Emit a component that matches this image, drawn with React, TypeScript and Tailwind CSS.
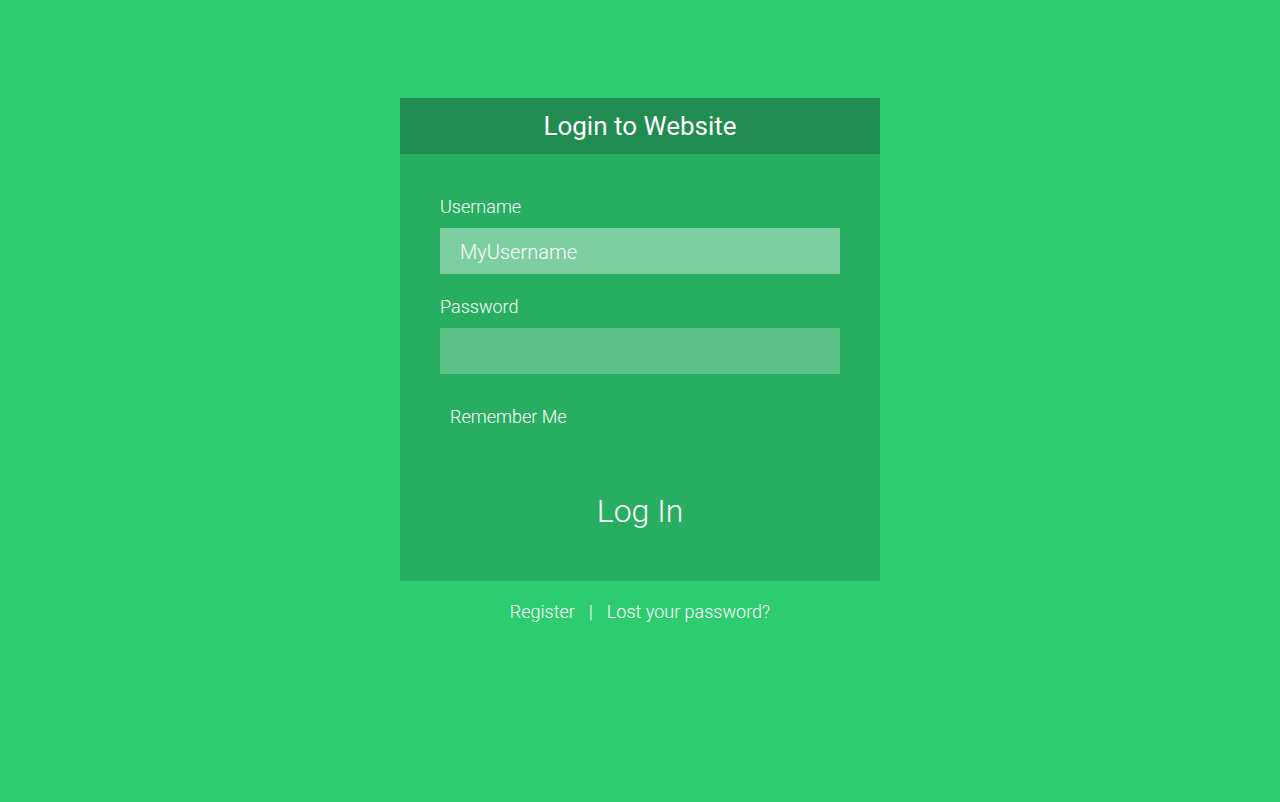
import React, { useState } from "react";

const App: React.FC = () => {
  const [username, setUsername] = useState("MyUsername");
  const [password, setPassword] = useState("");

  return (
    <div
      className="min-h-[802px] w-full bg-[#2ecc71] pt-[98px] text-white"
      style={{ fontFamily: "Roboto, 'Liberation Sans', sans-serif" }}
    >
      <div className="mx-auto w-[480px]">
        <div className="flex h-[56px] items-center justify-center bg-[#218c50]">
          <h1 className="text-[26px] font-normal leading-none">Login to Website</h1>
        </div>

        <form className="bg-[#27ae60] px-[40px] pt-[42px] pb-[50px]" onSubmit={(e) => e.preventDefault()}>
          <label className="mb-[10px] block text-[18px] font-light leading-[22px]">Username</label>
          <input
            type="text"
            value={username}
            onChange={(e) => setUsername(e.target.value)}
            className="block h-[46px] w-full bg-[#7dcea0] px-[20px] pt-[2px] text-[20px] font-light text-white outline-none"
          />

          <label className="mt-[22px] mb-[10px] block text-[18px] font-light leading-[22px]">Password</label>
          <input
            type="password"
            value={password}
            onChange={(e) => setPassword(e.target.value)}
            className="block h-[46px] w-full bg-[#5dc288] px-[20px] text-[20px] font-light text-white outline-none"
          />

          <label className="mt-[32px] block pl-[10px] text-[18px] font-light leading-[22px]">
            <input type="checkbox" className="hidden" />
            Remember Me
          </label>

          <button
            type="submit"
            className="mt-[63px] block w-full text-center text-[32px] font-light leading-[40px]"
          >
            Log In
          </button>
        </form>

        <p className="mt-[20px] flex items-center justify-center text-[18px] font-light leading-[22px]">
          <a href="#">Register</a>
          <span className="px-[14px]">|</span>
          <a href="#">Lost your password?</a>
        </p>
      </div>
    </div>
  );
};

export default App;
